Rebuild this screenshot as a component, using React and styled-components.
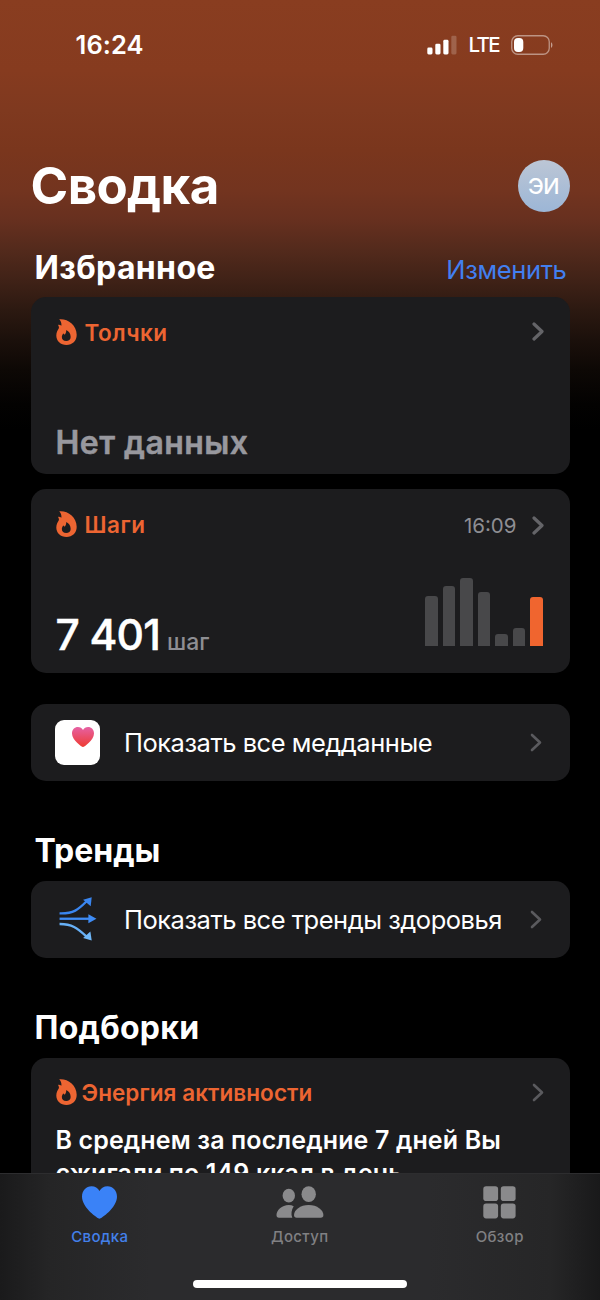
import styled, { createGlobalStyle } from 'styled-components';

const days = [49.5, 59.5, 67.5, 54, 11.5, 17.5, 48.5];

const Flame = () => (
  <FlameIcon viewBox="0 0 20 25">
    <path
      fillRule="evenodd"
      d="M3 0.3C11 -0.5 19.800 5.500 19.800 15.200C19.800 21.200 15.600 24.900 10 24.900C4.300 24.900 0.200 21.200 0.200 15.800C0.200 12.600 1.700 10.700 2.500 9.100C3 8 2.600 6.800 1.900 5.700C3.200 5.500 4.200 5.900 5 6.500C5.400 4.400 4.800 2 3 0.300ZM9.700 10.500C10 13 8.700 14.200 8.300 15.200C7.900 14.700 7.400 14.200 6.700 14C6.500 15.100 5.500 15.900 5.500 17.300C5.500 19.800 7.300 21.200 9.700 21.200C12.200 21.200 14 19.600 14 17.300C14 14.200 12.500 11.800 9.700 10.500Z"
    />
  </FlameIcon>
);

const Chevron = ({ thin }) => (
  <ChevronIcon viewBox="0 0 12 19" $thin={thin}>
    <path d="M2 2L10 9.500L2 17" />
  </ChevronIcon>
);

const HeartPath = () => (
  <path d="M17.500 32.500C16 32.500 0 21.500 0 10.500C0 4.300 4.100 0 9.500 0C13 0 15.900 1.700 17.500 4.700C19.100 1.700 22 0 25.500 0C30.900 0 35 4.300 35 10.500C35 21.500 19 32.500 17.500 32.500Z" />
);

const Signal = () => (
  <svg width="31" height="20" viewBox="0 0 31 20" fill="#fff">
    <rect x="0.300" y="12.500" width="5.200" height="7" rx="1.400" />
    <rect x="8.300" y="8.700" width="5.200" height="10.800" rx="1.400" />
    <rect x="16.300" y="4.800" width="5.200" height="14.700" rx="1.400" />
    <rect x="24.300" y="0.700" width="5.200" height="18.800" rx="1.400" opacity="0.200" />
  </svg>
);

const Battery = () => (
  <svg width="42" height="20" viewBox="0 0 42 20">
    <rect x="0.750" y="0.750" width="37.500" height="18.500" rx="6" fill="none" stroke="#fff" strokeOpacity="0.450" strokeWidth="1.300" />
    <rect x="3" y="3" width="9.300" height="14" rx="4" fill="#fff" />
    <path d="M40 7.200C41.900 7.900 41.900 12.100 40 12.800Z" fill="#fff" opacity="0.500" />
  </svg>
);

const HealthIcon = () => (
  <AppTile>
    <svg width="22" height="20" viewBox="0 0 35 32.500" preserveAspectRatio="none">
      <defs>
        <linearGradient id="heart" x1="0" y1="0" x2="0" y2="1">
          <stop offset="0" stopColor="#e661a4" />
          <stop offset="1" stopColor="#ee3b32" />
        </linearGradient>
      </defs>
      <g fill="url(#heart)">
        <HeartPath />
      </g>
    </svg>
  </AppTile>
);

const TrendsIcon = () => (
  <TrendsSvg viewBox="0 0 44 44">
    <g fill="none" strokeWidth="2.300">
      <path d="M4.500 16.200C18.500 16.600 23 12.500 31 4.500" stroke="#3a86f0" />
      <path d="M4.500 21.500H34.500" stroke="#3f8cf5" />
      <path d="M4.500 26.700C16.500 26.600 22 30.500 31 39" stroke="#67b0f6" />
    </g>
    <path d="M36.300 0.200L35.300 9.200L27.800 2.700Z" fill="#3a86f0" />
    <path d="M41 21.500L33 26V17Z" fill="#3f8cf5" />
    <path d="M36.300 43L27.800 40.500L35 34Z" fill="#6fb8fa" />
  </TrendsSvg>
);

const PeopleIcon = () => (
  <svg width="49" height="33" viewBox="0 0 49 33" fill="#8a8a8c">
    <ellipse cx="13.800" cy="9.700" rx="6.200" ry="6.900" />
    <path d="M18.700 20.200C17.300 19.400 15.600 19 13.800 19C6.800 19 1.500 24.200 1.500 29.100C1.500 30.900 2.300 31.700 4 31.700H17.300C15.700 28.200 16.500 23.600 18.700 20.200Z" />
    <ellipse cx="33.700" cy="8.200" rx="7.200" ry="7.900" />
    <path d="M33.700 19C25.300 19 19 24 19 29C19 30.900 19.900 31.700 21.700 31.700H45.700C47.500 31.700 48.400 30.900 48.400 29C48.400 24 42.100 19 33.700 19Z" />
  </svg>
);

const GridIcon = () => (
  <svg width="33" height="33" viewBox="0 0 33 33" fill="#8a8a8c">
    <rect x="0.300" y="0.300" width="14.800" height="14.800" rx="2.800" />
    <rect x="17.800" y="0.300" width="14.800" height="14.800" rx="2.800" />
    <rect x="0.300" y="17.600" width="14.800" height="14.800" rx="2.800" />
    <rect x="17.800" y="17.600" width="14.800" height="14.800" rx="2.800" />
  </svg>
);

const App = () => {
  return (
    <Screen>
      <GlobalStyle />
      <StatusBar>
        <Clock>16:24</Clock>
        <StatusIcons>
          <Signal />
          <Network>LTE</Network>
          <Battery />
        </StatusIcons>
      </StatusBar>

      <Header>
        <Title>Сводка</Title>
        <Avatar>ЭИ</Avatar>
      </Header>

      <SectionHead $top={36}>
        <Heading $spacing={0.35}>Избранное</Heading>
        <EditLink>Изменить</EditLink>
      </SectionHead>

      <Card $height={177}>
        <CardTop>
          <Flame />
          <CardTitle>Толчки</CardTitle>
          <Chevron />
        </CardTop>
        <NoData>Нет данных</NoData>
      </Card>

      <Card $height={183.5} $top={15}>
        <CardTop>
          <Flame />
          <CardTitle>Шаги</CardTitle>
          <Time>16:09</Time>
          <Chevron />
        </CardTop>
        <CardBottom>
          <Amount>
            <Value>7 401</Value>
            <Unit>шаг</Unit>
          </Amount>
          <Chart>
            {days.map((height, i) => (
              <Bar key={i} $today={i === days.length - 1} style={{ height }} />
            ))}
          </Chart>
        </CardBottom>
      </Card>

      <Row $top={31}>
        <HealthIcon />
        <RowText>Показать все медданные</RowText>
        <Chevron thin />
      </Row>

      <SectionHead $top={50.5}>
        <Heading $line={37}>Тренды</Heading>
      </SectionHead>
      <Row>
        <TrendsIcon />
        <RowText>Показать все тренды здоровья</RowText>
        <Chevron thin />
      </Row>

      <SectionHead $top={50.5}>
        <Heading $line={37} $spacing={0.25}>Подборки</Heading>
      </SectionHead>
      <Card $height={260}>
        <CardTop>
          <Flame />
          <CardTitle $light>Энергия активности</CardTitle>
          <Chevron thin />
        </CardTop>
        <Summary>
          В среднем за последние 7 дней Вы
          <br />
          сжигали по 149 ккал в день.
        </Summary>
      </Card>

      <TabBar>
        <Tabs>
          <Tab $active>
            <svg width="35" height="33" viewBox="0 0 35 32.500" fill="#3a82f7">
              <HeartPath />
            </svg>
            <TabLabel>Сводка</TabLabel>
          </Tab>
          <Tab>
            <PeopleIcon />
            <TabLabel>Доступ</TabLabel>
          </Tab>
          <Tab>
            <GridIcon />
            <TabLabel>Обзор</TabLabel>
          </Tab>
        </Tabs>
        <HomeIndicator />
      </TabBar>
    </Screen>
  );
};

export default App;

// Styled Components
const GlobalStyle = createGlobalStyle`
  * {
    box-sizing: border-box;
  }

  body {
    margin: 0;
    background: #000;
    font-family: Inter, 'Liberation Sans', sans-serif;
  }

  svg {
    display: block;
    flex-shrink: 0;
  }
`;

const Screen = styled.main`
  width: 600px;
  height: 1300px;
  padding: 0 30.5px;
  overflow: hidden;
  color: #fff;
  white-space: nowrap;
  background: linear-gradient(
    #893d20 0,
    #863b1f 70px,
    #7f391f 110px,
    #7a361d 150px,
    #73341f 190px,
    #67301f 220px,
    #532a1c 250px,
    #402217 280px,
    #2c1911 310px,
    #1b100b 340px,
    #0d0805 370px,
    #030201 405px,
    #000 430px
  );
`;

const StatusBar = styled.div`
  display: flex;
  justify-content: space-between;
  height: 160px;
  padding: 34px 17px 0 45px;
`;

const Clock = styled.span`
  font-size: 25.5px;
  font-weight: 600;
  line-height: 22px;
  letter-spacing: 0.1px;
`;

const StatusIcons = styled.div`
  display: flex;
  align-items: center;
  height: 21px;
`;

const Network = styled.span`
  width: 53px;
  padding: 1px 0 0 11px;
  font-size: 20.5px;
  font-weight: 500;
  line-height: 20px;
  letter-spacing: -1.7px;
`;

const Header = styled.header`
  display: flex;
  align-items: center;
  justify-content: space-between;
  height: 52px;
`;

const Title = styled.h1`
  margin: 0;
  font-size: 51px;
  font-weight: 700;
  line-height: 52px;
  letter-spacing: -0.6px;
`;

const Avatar = styled.div`
  width: 52px;
  height: 52px;
  border-radius: 50%;
  background: linear-gradient(#bcc6d5, #9cb6d6);
  font-size: 21.5px;
  font-weight: 500;
  line-height: 53px;
  letter-spacing: -0.5px;
  text-align: center;
`;

const SectionHead = styled.div`
  display: flex;
  justify-content: space-between;
  height: 38px;
  margin: ${({ $top }) => $top}px 3px 11px 4px;
`;

const Heading = styled.h2`
  margin: 0;
  font-size: 32px;
  font-weight: 700;
  line-height: ${({ $line }) => $line || 39}px;
  letter-spacing: ${({ $spacing }) => $spacing || 0}px;
`;

const EditLink = styled.span`
  color: #427ff0;
  font-size: 25.5px;
  line-height: 43px;
  letter-spacing: -0.35px;
`;

const Card = styled.section`
  display: flex;
  flex-direction: column;
  height: ${({ $height }) => $height}px;
  margin-top: ${({ $top }) => $top || 0}px;
  padding: 21.5px 26px 0 25px;
  border-radius: 15px;
  background: #1c1c1e;
`;

const CardTop = styled.div`
  display: flex;
  align-items: center;
  height: 26px;
`;

const FlameIcon = styled.svg`
  width: 21px;
  height: 26px;
  margin-left: 0.5px;
  fill: #ed6532;
`;

const ChevronIcon = styled.svg`
  width: 12px;
  height: 19px;
  margin-left: auto;
  fill: none;
  stroke: ${({ $thin }) => ($thin ? '#5a5a5e' : '#646468')};
  stroke-width: ${({ $thin }) => ($thin ? 2.6 : 3.2)};
  stroke-linecap: round;
  stroke-linejoin: round;
`;

const CardTitle = styled.span`
  margin-left: ${({ $light }) => ($light ? 4.5 : 7.5)}px;
  padding-top: ${({ $light }) => ($light ? 1 : 2)}px;
  color: #ed6532;
  font-size: 22.5px;
  font-weight: 600;
  line-height: 26px;
  letter-spacing: ${({ $light }) => ($light ? 0.06 : 0.5)}px;
`;

const Time = styled.span`
  margin-left: auto;
  padding-top: 5px;
  color: #8e8e93;
  font-size: 20.5px;
  line-height: 26px;

  & + svg {
    margin: 4px 0 0 15px;
  }
`;

const NoData = styled.span`
  margin-top: 79.5px;
  color: #98989e;
  font-size: 32px;
  font-weight: 600;
  line-height: 38px;
  letter-spacing: 0.45px;
  -webkit-text-stroke: 0.5px #98989e;
`;

const CardBottom = styled.div`
  display: flex;
  align-items: flex-end;
  justify-content: space-between;
  height: 122.5px;
`;

const Amount = styled.div`
  display: flex;
  align-items: baseline;
  gap: 7px;
  line-height: 34px;
`;

const Value = styled.span`
  font-size: 42.5px;
  font-weight: 500;
  letter-spacing: -0.8px;
  -webkit-text-stroke: 0.5px #fff;
`;

const Unit = styled.span`
  color: #8e8e93;
  font-size: 23px;
  font-weight: 500;
`;

const Chart = styled.div`
  display: flex;
  align-items: flex-end;
  gap: 5.3px;
  margin: 0 1px 13.5px 0;
`;

const Bar = styled.div`
  width: 12.2px;
  border-radius: 3px 3px 0 0;
  background: ${({ $today }) => ($today ? '#f0652f' : '#48484a')};
`;

const Row = styled.section`
  display: flex;
  align-items: center;
  height: 77.5px;
  margin-top: ${({ $top }) => $top || 0}px;
  padding: 0 28px 0 24.5px;
  border-radius: 15px;
  background: #1c1c1e;
`;

const AppTile = styled.div`
  display: flex;
  justify-content: flex-end;
  width: 44.5px;
  height: 44.5px;
  padding: 6.5px 6px 0 0;
  border-radius: 9px;
  background: #fff;
`;

const TrendsSvg = styled.svg`
  width: 44.5px;
  height: 44.5px;
`;

const RowText = styled.span`
  margin-left: 24.5px;
  padding-top: 1px;
  font-size: 25.5px;
  line-height: 32px;
  letter-spacing: -0.48px;
`;

const Summary = styled.p`
  margin: 19px 0 0;
  font-size: 25px;
  font-weight: 600;
  line-height: 33px;
  letter-spacing: 0.13px;
`;

const TabBar = styled.nav`
  position: fixed;
  top: 1173px;
  left: 0;
  width: 600px;
  height: 127px;
  border-top: 1px solid #2d2d2f;
  background: linear-gradient(90deg, #1a1a1b 0, #252526 50px, #2b2b2d 150px, #2b2b2d 430px, #262627 550px, #19191a 600px);
`;

const Tabs = styled.div`
  display: grid;
  grid-template-columns: repeat(3, 200px);
  height: 106px;
  margin-left: -1px;
  padding-top: 12px;
`;

const Tab = styled.div`
  display: flex;
  flex-direction: column;
  align-items: center;
  color: ${({ $active }) => ($active ? '#4380ea' : '#808083')};
`;

const TabLabel = styled.span`
  margin-top: 9px;
  padding-left: 1.5px;
  font-size: 15px;
  font-weight: 500;
  line-height: 18px;
  letter-spacing: 0.35px;
`;

const HomeIndicator = styled.div`
  width: 214px;
  height: 8px;
  margin: 0 auto;
  border-radius: 4px;
  background: #fff;
`;
